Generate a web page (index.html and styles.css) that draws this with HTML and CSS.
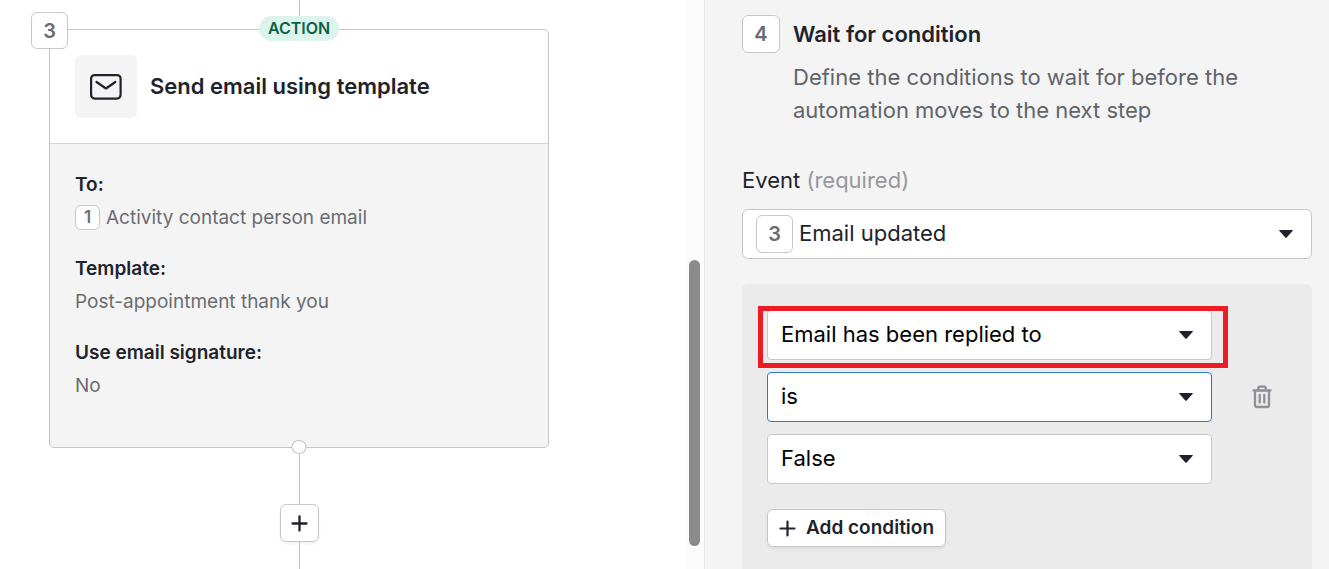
FILE: index.html
```html
<!DOCTYPE html>
<html lang="en">
<head>
<meta charset="utf-8">
<meta name="viewport" content="width=device-width, initial-scale=1">
<title>Automation editor</title>
<link rel="stylesheet" href="styles.css">
</head>
<body class="app">
  <main class="canvas">
    <div class="connector connector-top"></div>
    <article class="card">
      <span class="chip card-step">3</span>
      <span class="card-type">ACTION</span>
      <span class="card-port"></span>
      <header class="card-header">
        <span class="card-icon">
          <svg width="32" height="26" viewBox="0 0 32 26" fill="none" stroke="#21232c" stroke-width="2.200" stroke-linecap="round" stroke-linejoin="round">
            <rect x="1.100" y="1.100" width="29.500" height="23.500" rx="3.500"/>
            <path d="M6.500 8l9.500 6.500L25.300 8"/>
          </svg>
        </span>
        <h2 class="title">Send email using template</h2>
      </header>
      <dl class="details">
        <div class="detail">
          <dt class="detail-name">To:</dt>
          <dd class="detail-value"><span class="chip chip-small">1</span>Activity contact person email</dd>
        </div>
        <div class="detail">
          <dt class="detail-name">Template:</dt>
          <dd class="detail-value">Post-appointment thank you</dd>
        </div>
        <div class="detail">
          <dt class="detail-name">Use email signature:</dt>
          <dd class="detail-value">No</dd>
        </div>
      </dl>
    </article>
    <div class="connector connector-mid"></div>
    <button class="button add-step" type="button" aria-label="Add step">
      <svg width="17" height="17" viewBox="0 0 17 17" stroke="#21232c" stroke-width="2.300" stroke-linecap="round"><path d="M8.500 1.500v14M1.500 8.500h14"/></svg>
    </button>
    <div class="connector connector-end"></div>
  </main>

  <div class="scroll-track"><div class="scroll-thumb"></div></div>

  <aside class="panel">
    <header class="panel-header">
      <span class="chip">4</span>
      <div class="panel-intro">
        <h2 class="title panel-title">Wait for condition</h2>
        <p class="description">Define the conditions to wait for before the automation moves to the next step</p>
      </div>
    </header>

    <label class="field-label" for="event">Event <span class="hint">(required)</span></label>
    <div class="field">
      <select class="select select-event" id="event"><option>Email updated</option></select>
      <span class="chip event-step">3</span>
      <svg class="caret" width="14" height="8" viewBox="0 0 14 8"><path d="M.5 0h13q.6.500 0 1L7.700 7.500q-.7.600-1.400 0L.5 1q-.6-.5 0-1z" fill="#21232c"/></svg>
    </div>

    <section class="conditions">
      <div class="condition">
        <div class="condition-fields">
          <div class="field">
            <select class="select" aria-label="Field"><option>Email has been replied to</option></select>
            <svg class="caret" width="14" height="8" viewBox="0 0 14 8"><path d="M.5 0h13q.6.500 0 1L7.700 7.500q-.7.600-1.400 0L.5 1q-.6-.5 0-1z" fill="#21232c"/></svg>
            <span class="highlight"></span>
          </div>
          <div class="field">
            <select class="select select-active" aria-label="Operator"><option>is</option></select>
            <svg class="caret" width="14" height="8" viewBox="0 0 14 8"><path d="M.5 0h13q.6.500 0 1L7.700 7.500q-.7.600-1.400 0L.5 1q-.6-.5 0-1z" fill="#21232c"/></svg>
          </div>
          <div class="field">
            <select class="select" aria-label="Value"><option>False</option></select>
            <svg class="caret" width="14" height="8" viewBox="0 0 14 8"><path d="M.5 0h13q.6.500 0 1L7.700 7.500q-.7.600-1.400 0L.5 1q-.6-.5 0-1z" fill="#21232c"/></svg>
          </div>
        </div>
        <button class="delete" type="button" aria-label="Delete condition">
          <svg width="20" height="24" viewBox="0 0 20 24" fill="none" stroke="#8f9095" stroke-width="2.300" stroke-linecap="round" stroke-linejoin="round">
            <path d="M1.500 5.500h17M6.300 5.500V3q0-1.400 1.400-1.400h4.600q1.400 0 1.400 1.400v2.500M3 6v14q0 2 2 2h10q2 0 2-2V6M7.700 10v7.500M12.300 10v7.500"/>
          </svg>
        </button>
      </div>
      <button class="button add-condition" type="button">
        <svg width="17" height="17" viewBox="0 0 17 17" stroke="#21232c" stroke-width="2.200" stroke-linecap="round"><path d="M8.500 1.500v14M1.500 8.500h14"/></svg>
        Add condition
      </button>
    </section>
  </aside>
</body>
</html>
```
FILE: styles.css
```css
* {
  box-sizing: border-box;
}

.app {
  display: grid;
  grid-template-columns: minmax(0, 685fr) 19px minmax(0, 625fr);
  min-height: 100vh;
  margin: 0;
  background: #fff;
  color: #21232c;
  font: 22px/33px Inter, "Liberation Sans", sans-serif;
}

/* Canvas */
.canvas {
  display: flex;
  flex-direction: column;
  align-items: center;
  padding: 0 136px 0 49px;
}

.connector {
  width: 1px;
  background: #c4c4c4;
}

.connector-top {
  height: 29px;
}

.connector-mid {
  height: 56px;
}

.connector-end {
  flex: 1;
}

.card {
  position: relative;
  align-self: stretch;
  border: 1px solid #c7c7c7;
  border-radius: 5px;
  background: #f4f4f4;
}

.card-header {
  display: flex;
  align-items: center;
  gap: 13px;
  padding: 25px;
  border-bottom: 1px solid #d6d6d6;
  border-radius: 5px 5px 0 0;
  background: #fff;
}

.card-icon {
  display: grid;
  flex: none;
  place-items: center;
  width: 62px;
  height: 63px;
  border-radius: 6px;
  background: #f4f4f4;
}

.title {
  margin: 0;
  font-size: 22px;
  font-weight: 600;
}

.chip {
  display: grid;
  flex: none;
  place-items: center;
  width: 38px;
  height: 38px;
  border: 1px solid #c7c7c7;
  border-radius: 6px;
  background: #fff;
  color: #6b6c72;
  font-size: 20px;
  font-weight: 600;
  line-height: 36px;
}

.chip-small {
  width: 25px;
  height: 25px;
  font-size: 17px;
  line-height: 23px;
}

.card-step {
  position: absolute;
  top: -18px;
  left: -19px;
  width: 37px;
  height: 37px;
}

.card-type {
  position: absolute;
  top: -14px;
  left: 50%;
  padding: 0 9px;
  border-radius: 13px;
  background: #ddf4ed;
  color: #0a6148;
  font-size: 16px;
  font-weight: 600;
  line-height: 25px;
  transform: translateX(-50%);
}

.card-port {
  position: absolute;
  bottom: -7px;
  left: 50%;
  width: 15px;
  height: 14px;
  border: 1px solid #c4c4c4;
  border-radius: 50%;
  background: #fff;
  transform: translateX(-50%);
}

.details {
  display: grid;
  gap: 18px;
  margin: 0;
  padding: 24px 25px 45px;
  font-size: 19px;
}

.detail-name {
  font-weight: 600;
}

.detail-value {
  display: flex;
  align-items: center;
  gap: 6px;
  margin: 0;
  color: #6b6c72;
}

.button {
  display: flex;
  align-items: center;
  justify-content: center;
  height: 38px;
  border: 1px solid #c7c7c7;
  border-radius: 6px;
  background: #fff;
  box-shadow: 0 2px 3px rgb(0 0 0 / 6%);
  color: #21232c;
  font: 600 19px/24px Inter, "Liberation Sans", sans-serif;
}

.add-step {
  width: 39px;
  padding: 0;
}

/* Scroll bar between canvas and panel */
.scroll-track {
  padding: 260px 4px 0;
  background: #fcfcfc;
}

.scroll-thumb {
  height: 286px;
  border-radius: 6px;
  background: #8b8b8b;
}

/* Step settings */
.panel {
  display: flex;
  flex-direction: column;
  padding: 15px 17px 0 37px;
  border-left: 1px solid #e8e8e8;
  background: #f4f4f4;
}

.panel-header {
  display: flex;
  gap: 13px;
  margin-bottom: 37px;
}

.panel-title {
  line-height: 38px;
}

.description {
  margin: 8px 0 0;
  color: #62636a;
}

.field-label {
  margin-bottom: 12px;
}

.hint {
  color: #97989d;
}

.field {
  position: relative;
}

.select {
  display: block;
  appearance: none;
  width: 100%;
  height: 50px;
  padding: 0 44px 1px 13px;
  border: 1px solid #c7c7c7;
  border-radius: 4px;
  background: #fff;
  color: #000;
  font: 22px/33px Inter, "Liberation Sans", sans-serif;
}

.select-event {
  padding-left: 56px;
  border-radius: 6px;
  color: #21232c;
}

.select-active {
  border-color: #2f76cf;
}

.event-step {
  position: absolute;
  top: 6px;
  left: 14px;
  width: 37px;
  pointer-events: none;
}

.caret {
  position: absolute;
  top: 21px;
  right: 19px;
  pointer-events: none;
}

.highlight {
  position: absolute;
  inset: -4px -16px -8px -9px;
  border: 5px solid #ed1c24;
  pointer-events: none;
}

.conditions {
  flex: 1;
  margin-top: 25px;
  padding: 26px 0 22px 25px;
  border-radius: 6px 6px 0 0;
  background: #ebebeb;
}

.condition {
  display: flex;
  align-items: center;
}

.condition-fields {
  flex: 1;
  display: grid;
  gap: 12px;
}

.delete {
  display: grid;
  place-items: center;
  width: 100px;
  height: 50px;
  padding: 0;
  border: 0;
  background: none;
}

.add-condition {
  gap: 10px;
  margin-top: 25px;
  padding: 0 11px;
}
```
